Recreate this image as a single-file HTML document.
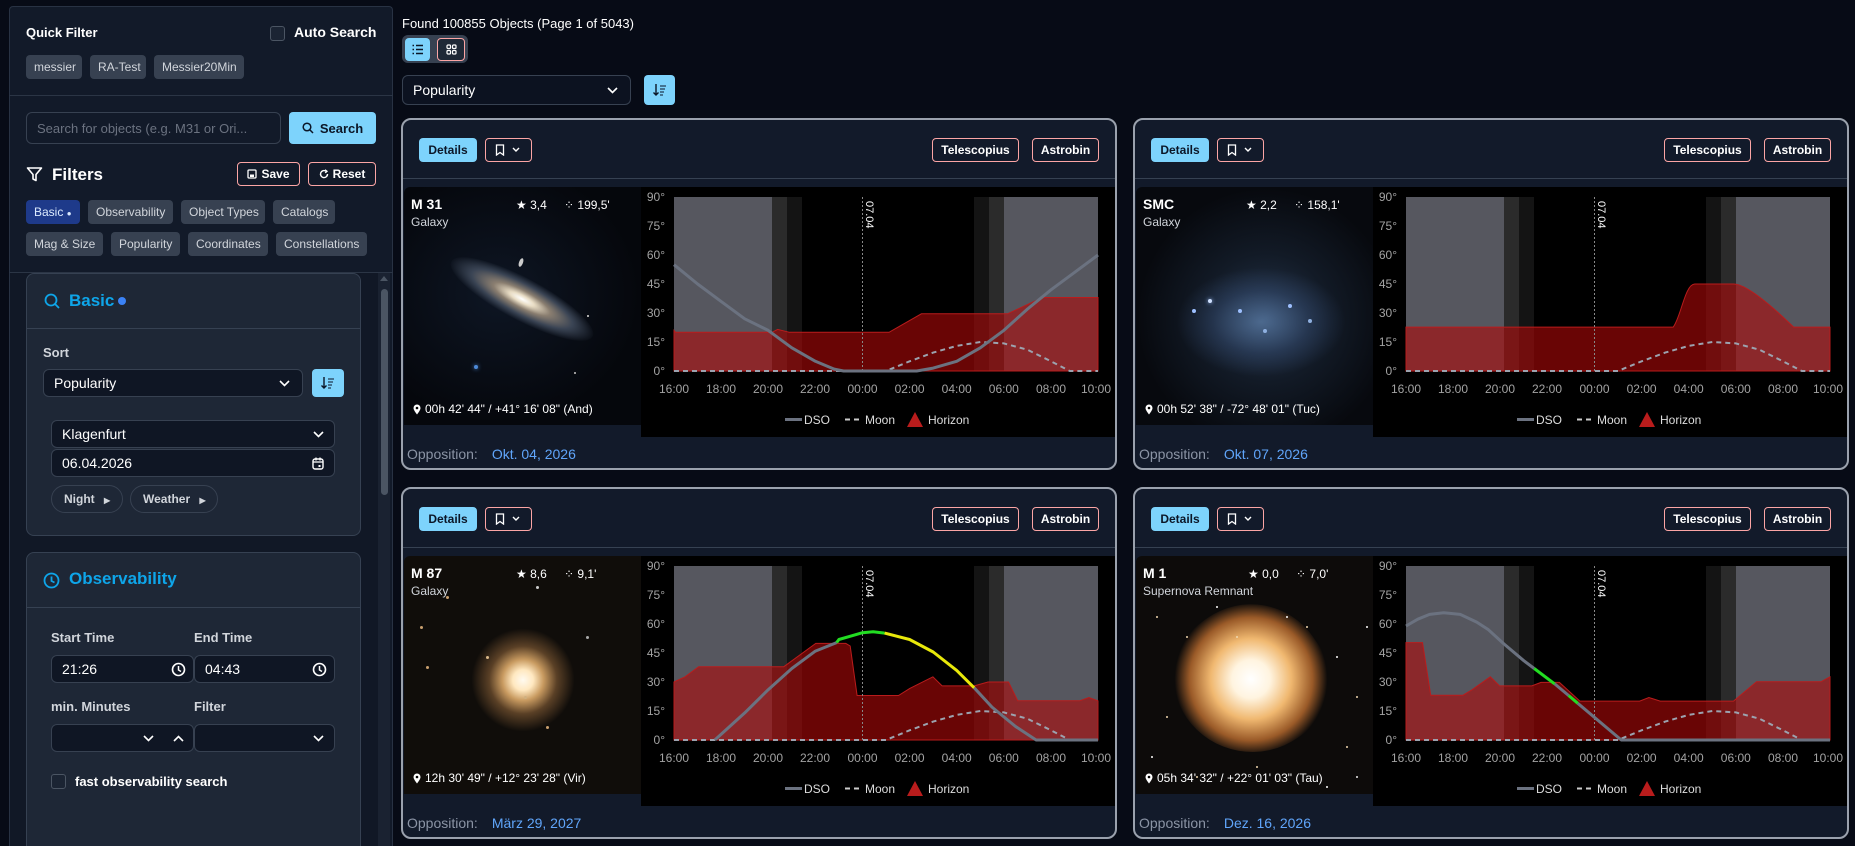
<!DOCTYPE html>
<html><head><meta charset="utf-8">
<style>
*{box-sizing:border-box;margin:0;padding:0}
html,body{width:1855px;height:846px;overflow:hidden}
body{background:#070b16;font-family:"Liberation Sans",sans-serif;color:#fff;position:relative}
.a{position:absolute}
.side{left:9px;top:6px;width:384px;height:845px;background:#121a29;border:1px solid #283243;border-bottom:none;border-radius:4px 4px 0 0}
.chip{position:absolute;height:24px;line-height:24px;background:#374151;color:#d1d5db;font-size:12px;padding:0 8px;border-radius:4px;white-space:nowrap}
.hl{position:absolute;left:9px;width:384px;height:1px;background:#2b3545}
.inp{position:absolute;background:#0f1624;border:1px solid #374151;border-radius:6px;font-size:14px;color:#fff;padding-left:10px;display:flex;align-items:center}
.lbl{position:absolute;font-size:13px;font-weight:bold;color:#d1d5db}
.pcard{position:absolute;left:26px;width:335px;background:#1e2736;border:1px solid #364152;border-radius:8px}
.obtn{position:absolute;height:24px;border:1px solid #fca5a5;border-radius:4px;font-size:12px;font-weight:bold;color:#fff;display:flex;align-items:center;justify-content:center;gap:4px}
.card{position:absolute;width:716px;height:352px;border:2px solid #9aa1ad;border-radius:10px;background:#121a2a;overflow:hidden}
.card .det{position:absolute;left:16px;top:18px;width:58px;height:24px;background:#7dd3fc;color:#0b1627;border-radius:4px;font-size:12px;font-weight:bold;text-align:center;line-height:24px}
.card .bm{left:82px;top:18px;width:47px}
.card .tel{right:96px;top:18px;width:87px}
.card .ast{right:16px;top:18px;width:67px}
.card .dv{position:absolute;left:0;right:0;top:58px;height:1px;background:#364152}
.card .img{position:absolute;left:1px;top:67px;width:237px;height:238px;background:#000;overflow:hidden;border-radius:6px 0 0 0}
.card .ch{position:absolute;left:238px;top:67px;width:475px;height:250px;background:#000}
.card .opp{position:absolute;left:4px;top:326px;font-size:14px;color:#8b94a5}
.card .opp b{font-weight:normal;color:#60a5fa;margin-left:14px}
.nm{position:absolute;left:7px;top:9px;font-size:14px;font-weight:bold;color:#fff}
.ty{position:absolute;left:7px;top:28px;font-size:12px;color:#d1d5db}
.mg{position:absolute;left:112px;top:11px;font-size:12px;color:#fff}
.sz{position:absolute;left:160px;top:11px;font-size:12px;color:#fff}
.co{position:absolute;left:9px;top:215px;font-size:12px;color:#fff;display:flex;align-items:center;gap:4px}
svg text{font-family:"Liberation Sans",sans-serif}
</style></head><body>

<div class="a side"></div>
<div class="a" style="left:26px;top:25px;font-size:13px;font-weight:bold">Quick Filter</div>
<div class="a" style="left:270px;top:26px;width:15px;height:15px;border:1px solid #4b5563;background:#1b2433;border-radius:3px"></div>
<div class="a" style="left:294px;top:24px;font-size:14px;font-weight:bold">Auto Search</div>
<div class="chip" style="left:26px;top:55px;width:56px">messier</div>
<div class="chip" style="left:90px;top:55px;width:56px">RA-Test</div>
<div class="chip" style="left:154px;top:55px;width:90px">Messier20Min</div>
<div class="hl" style="top:95px"></div>
<div class="inp" style="left:26px;top:112px;width:255px;height:32px;color:#6b7280;font-size:13px;background:#121a29">Search for objects (e.g. M31 or Ori...</div>
<div class="a" style="left:289px;top:112px;width:87px;height:32px;background:#7dd3fc;border-radius:4px;color:#0b1627;font-size:13px;font-weight:bold;display:flex;align-items:center;justify-content:center;gap:6px">
<svg width="12" height="12" viewBox="0 0 12 12"><circle cx="5" cy="5" r="3.8" fill="none" stroke="#0b1627" stroke-width="1.5"/><path d="M8 8l3 3" stroke="#0b1627" stroke-width="1.5"/></svg>Search</div>
<svg class="a" style="left:26px;top:166px" width="17" height="17" viewBox="0 0 17 17"><path d="M1.5 2h14l-5.5 6.5v6l-3-1.5v-4.5z" fill="none" stroke="#fff" stroke-width="1.6" stroke-linejoin="round"/></svg>
<div class="a" style="left:52px;top:165px;font-size:17px;font-weight:bold">Filters</div>
<div class="obtn" style="left:237px;top:162px;width:63px"><svg width="10" height="10" viewBox="0 0 10 10"><rect x="1" y="1" width="8" height="8" rx="1" fill="none" stroke="#fff" stroke-width="1.3"/><rect x="3" y="5.5" width="4" height="2.5" fill="#fff"/></svg>Save</div>
<div class="obtn" style="left:308px;top:162px;width:68px"><svg width="10" height="10" viewBox="0 0 10 10"><path d="M8.5 5A3.5 3.5 0 1 1 7 2.2" fill="none" stroke="#fff" stroke-width="1.4"/><path d="M6 0.8l2 1.5-1.8 1.6" fill="none" stroke="#fff" stroke-width="1.3"/></svg>Reset</div>
<div class="chip" style="left:26px;top:200px;width:54px;background:#1e3a8a;color:#dbeafe">Basic <span style="font-size:8px">●</span></div>
<div class="chip" style="left:88px;top:200px;width:85px">Observability</div>
<div class="chip" style="left:181px;top:200px;width:84px">Object Types</div>
<div class="chip" style="left:273px;top:200px;width:62px">Catalogs</div>
<div class="chip" style="left:26px;top:232px;width:77px">Mag &amp; Size</div>
<div class="chip" style="left:111px;top:232px;width:69px">Popularity</div>
<div class="chip" style="left:188px;top:232px;width:80px">Coordinates</div>
<div class="chip" style="left:276px;top:232px;width:91px">Constellations</div>
<div class="hl" style="top:272px"></div>
<div class="a" style="left:10px;top:273px;width:368px;height:573px;background:#111826"></div>
<div class="a" style="left:378px;top:273px;width:12px;height:573px;background:#1a2231"></div>
<div class="a" style="left:381px;top:289px;width:7px;height:206px;background:#4b5563;border-radius:4px"></div>
<div class="a" style="left:380px;top:276px;width:0;height:0;border-left:4px solid transparent;border-right:4px solid transparent;border-bottom:5px solid #4b5563"></div>

<div class="pcard" style="top:273px;height:263px"></div>
<svg class="a" style="left:44px;top:293px" width="16" height="16" viewBox="0 0 16 16"><circle cx="7" cy="7" r="5.5" fill="none" stroke="#0ea5e9" stroke-width="1.8"/><path d="M11 11l4 4" stroke="#0ea5e9" stroke-width="1.8"/></svg>
<div class="a" style="left:69px;top:291px;font-size:17px;font-weight:bold;color:#0ea5e9">Basic</div>
<div class="a" style="left:118px;top:297px;width:8px;height:8px;border-radius:50%;background:#3b82f6"></div>
<div class="a" style="left:27px;top:328px;width:333px;height:1px;background:#364152"></div>
<div class="lbl" style="left:43px;top:345px">Sort</div>
<div class="inp" style="left:43px;top:369px;width:260px;height:28px">Popularity
<svg class="a" style="right:12px;top:10px" width="11" height="7" viewBox="0 0 11 7"><path d="M1 1l4.5 4.5L10 1" fill="none" stroke="#fff" stroke-width="1.6"/></svg></div>
<div class="a" style="left:312px;top:369px;width:32px;height:28px;background:#7dd3fc;border-radius:4px"><svg style="position:absolute;left:8px;top:7px" width="16" height="14" viewBox="0 0 16 14"><path d="M4 1v11M1.5 9.5L4 12l2.5-2.5" fill="none" stroke="#0b1627" stroke-width="1.4"/><path d="M8 3h6M8 6h5M8 9h4M8 12h3" stroke="#0b1627" stroke-width="1.1"/></svg></div>
<div class="inp" style="left:51px;top:420px;width:284px;height:28px">Klagenfurt
<svg class="a" style="right:10px;top:10px" width="11" height="7" viewBox="0 0 11 7"><path d="M1 1l4.5 4.5L10 1" fill="none" stroke="#fff" stroke-width="1.6"/></svg></div>
<div class="inp" style="left:51px;top:449px;width:284px;height:28px">06.04.2026
<svg class="a" style="right:10px;top:7px" width="12" height="13" viewBox="0 0 12 13"><rect x="1" y="2" width="10" height="10" rx="2" fill="none" stroke="#fff" stroke-width="1.4"/><path d="M1 5h10M4 0.5v3M8 0.5v3" stroke="#fff" stroke-width="1.3"/><rect x="6.5" y="8" width="2" height="2" fill="#fff"/></svg></div>
<div class="a" style="left:51px;top:485px;width:72px;height:28px;border:1px solid #374151;border-radius:14px;font-size:12px;font-weight:bold;color:#d1d5db;line-height:26px;padding-left:12px">Night <span style="font-size:8px;margin-left:6px">▶</span></div>
<div class="a" style="left:130px;top:485px;width:88px;height:28px;border:1px solid #374151;border-radius:14px;font-size:12px;font-weight:bold;color:#d1d5db;line-height:26px;padding-left:12px">Weather <span style="font-size:8px;margin-left:6px">▶</span></div>

<div class="pcard" style="top:552px;height:320px"></div>
<svg class="a" style="left:43px;top:572px" width="17" height="17" viewBox="0 0 17 17"><circle cx="8.5" cy="8.5" r="7" fill="none" stroke="#0ea5e9" stroke-width="1.8"/><path d="M8.5 4.5v4.5l3 1.5" fill="none" stroke="#0ea5e9" stroke-width="1.8"/></svg>
<div class="a" style="left:69px;top:569px;font-size:17px;font-weight:bold;color:#0ea5e9">Observability</div>
<div class="a" style="left:27px;top:607px;width:333px;height:1px;background:#364152"></div>
<div class="lbl" style="left:51px;top:630px">Start Time</div>
<div class="lbl" style="left:194px;top:630px">End Time</div>
<div class="inp" style="left:51px;top:655px;width:143px;height:28px">21:26
<svg class="a" style="right:7px;top:6px" width="15" height="15" viewBox="0 0 15 15"><circle cx="7.5" cy="7.5" r="6" fill="none" stroke="#fff" stroke-width="1.6"/><path d="M7.5 4v4l2.5 1.5" fill="none" stroke="#fff" stroke-width="1.5"/></svg></div>
<div class="inp" style="left:194px;top:655px;width:141px;height:28px">04:43
<svg class="a" style="right:7px;top:6px" width="15" height="15" viewBox="0 0 15 15"><circle cx="7.5" cy="7.5" r="6" fill="none" stroke="#fff" stroke-width="1.6"/><path d="M7.5 4v4l2.5 1.5" fill="none" stroke="#fff" stroke-width="1.5"/></svg></div>
<div class="lbl" style="left:51px;top:699px">min. Minutes</div>
<div class="lbl" style="left:194px;top:699px">Filter</div>
<div class="inp" style="left:51px;top:724px;width:143px;height:28px">
<svg class="a" style="left:91px;top:10px" width="11" height="7" viewBox="0 0 11 7"><path d="M1 1l4.5 4.5L10 1" fill="none" stroke="#fff" stroke-width="1.6"/></svg>
<svg class="a" style="left:121px;top:10px" width="11" height="7" viewBox="0 0 11 7"><path d="M1 6l4.5-4.5L10 6" fill="none" stroke="#fff" stroke-width="1.6"/></svg></div>
<div class="inp" style="left:194px;top:724px;width:141px;height:28px">
<svg class="a" style="right:10px;top:10px" width="11" height="7" viewBox="0 0 11 7"><path d="M1 1l4.5 4.5L10 1" fill="none" stroke="#fff" stroke-width="1.6"/></svg></div>
<div class="a" style="left:51px;top:774px;width:15px;height:15px;border:1px solid #4b5563;background:#1b2433;border-radius:3px"></div>
<div class="a" style="left:75px;top:774px;font-size:13px;font-weight:bold">fast observability search</div>

<div class="a" style="left:402px;top:16px;font-size:13px">Found 100855 Objects (Page 1 of 5043)</div>
<div class="a" style="left:402px;top:35px;width:66px;height:28px;background:#374151;border-radius:6px"></div>
<div class="a" style="left:405px;top:38px;width:25px;height:23px;background:#7dd3fc;border-radius:4px"><svg style="position:absolute;left:7px;top:6px" width="11" height="11" viewBox="0 0 11 11"><path d="M0.5 1.5h1.5M0.5 5.5h1.5M0.5 9.5h1.5M4 1.5h7M4 5.5h7M4 9.5h7" stroke="#0b1627" stroke-width="1.4"/></svg></div>
<div class="a" style="left:437px;top:38px;width:28px;height:23px;background:#1f2937;border:1px solid #fca5a5;border-radius:4px"><svg style="position:absolute;left:8px;top:5px" width="11" height="11" viewBox="0 0 11 11"><rect x="1" y="1" width="3.5" height="3.5" rx="1" fill="none" stroke="#fff" stroke-width="1.2"/><rect x="6.5" y="1" width="3.5" height="3.5" rx="1" fill="none" stroke="#fff" stroke-width="1.2"/><rect x="1" y="6.5" width="3.5" height="3.5" rx="1" fill="none" stroke="#fff" stroke-width="1.2"/><rect x="6.5" y="6.5" width="3.5" height="3.5" rx="1" fill="none" stroke="#fff" stroke-width="1.2"/></svg></div>
<div class="inp" style="left:402px;top:75px;width:229px;height:30px;font-size:14px;background:#0c1220">Popularity
<svg class="a" style="right:12px;top:11px" width="11" height="7" viewBox="0 0 11 7"><path d="M1 1l4.5 4.5L10 1" fill="none" stroke="#fff" stroke-width="1.6"/></svg></div>
<div class="a" style="left:644px;top:75px;width:31px;height:30px;background:#7dd3fc;border-radius:4px"><svg style="position:absolute;left:8px;top:8px" width="16" height="14" viewBox="0 0 16 14"><path d="M4 1v11M1.5 9.5L4 12l2.5-2.5" fill="none" stroke="#0b1627" stroke-width="1.4"/><path d="M8 3h6M8 6h5M8 9h4M8 12h3" stroke="#0b1627" stroke-width="1.1"/></svg></div>

<svg width="0" height="0" style="position:absolute">
<defs>
<g id="bg">
<rect x="33" y="10" width="98" height="174" fill="#56575f"/>
<rect x="131" y="10" width="15" height="174" fill="#2b2b2b"/>
<rect x="146" y="10" width="15" height="174" fill="#141414"/>
<rect x="333" y="10" width="15" height="174" fill="#141414"/>
<rect x="348" y="10" width="15" height="174" fill="#2b2b2b"/>
<rect x="363" y="10" width="94" height="174" fill="#56575f"/>
</g>
<g id="ov">
<line x1="221.5" y1="10" x2="221.5" y2="184" stroke="#888" stroke-width="1" stroke-dasharray="2,2"/>
<text transform="translate(225,14) rotate(90)" font-size="11" fill="#fff">07.04</text>
<polyline points="33,184 245,184 268.6,174.3 292.2,165.6 315.7,158.9 339.3,155 362.8,156.4 386.4,162.7 410,174.3 428.8,184 457,184" fill="none" stroke="#9ca3af" stroke-width="2" stroke-dasharray="5,4"/>
<g font-size="12" fill="#a3a3a3" text-anchor="end">
<text x="24" y="14">90°</text><text x="24" y="43">75°</text><text x="24" y="72">60°</text><text x="24" y="101">45°</text><text x="24" y="130">30°</text><text x="24" y="159">15°</text><text x="24" y="188">0°</text></g>
<g font-size="12" fill="#a3a3a3" text-anchor="middle">
<text x="33" y="206">16:00</text><text x="80" y="206">18:00</text><text x="127" y="206">20:00</text><text x="174" y="206">22:00</text><text x="221.5" y="206">00:00</text><text x="268.6" y="206">02:00</text><text x="315.7" y="206">04:00</text><text x="362.8" y="206">06:00</text><text x="410" y="206">08:00</text><text x="455" y="206">10:00</text></g>
<rect x="144" y="231" width="17" height="3" fill="#6b7280"/>
<text x="163" y="237" font-size="12" fill="#ddd">DSO</text>
<path d="M204 232.5h5M213 232.5h5" stroke="#ccc" stroke-width="2"/>
<text x="224" y="237" font-size="12" fill="#ddd">Moon</text>
<path d="M266 240L274 225L282 240Z" fill="#b91c1c"/>
<text x="287" y="237" font-size="12" fill="#ddd">Horizon</text>
</g>
</defs></svg>

<div class="card" style="left:401px;top:118px">
<div class="det">Details</div>
<div class="obtn bm"><svg width="10" height="12" viewBox="0 0 10 12"><path d="M1.5 1h7v10L5 8.5 1.5 11z" fill="none" stroke="#fff" stroke-width="1.3"/></svg><svg width="14" height="8" viewBox="0 0 14 8"><path d="M4 2l3 3 3-3" fill="none" stroke="#fff" stroke-width="1.4"/></svg></div>
<div class="obtn tel">Telescopius</div><div class="obtn ast">Astrobin</div>
<div class="dv"></div>
<div class="img" style="background:radial-gradient(ellipse at 40% 45%,#0e1624 0%,#05070c 70%)">
<div class="a" style="left:38px;top:91px;width:160px;height:42px;border-radius:50%;transform:rotate(28deg);background:radial-gradient(ellipse,#fff 0%,#e8dcc4 12%,#8a7e70 28%,#3a4454 50%,rgba(20,30,45,0) 72%)"></div>
<div class="a" style="left:115px;top:71px;width:4px;height:9px;border-radius:50%;background:#ccc;transform:rotate(20deg)"></div>
<div class="a" style="left:70px;top:178px;width:4px;height:4px;border-radius:50%;background:#4d8ad8;box-shadow:0 0 4px #4d8ad8"></div>
<div class="a" style="left:183px;top:128px;width:2px;height:2px;background:#aaa"></div>
<div class="a" style="left:170px;top:185px;width:2px;height:2px;background:#999"></div>
<div class="nm">M 31</div><div class="ty">Galaxy</div>
<div class="mg">★ 3,4</div><div class="sz">⁘ 199,5'</div>
<div class="co"><svg width="8" height="11" viewBox="0 0 8 11"><path d="M4 10.5C1 6.5 0.5 5 0.5 4A3.5 3.5 0 0 1 7.5 4c0 1-.5 2.5-3.5 6.5z" fill="#fff"/><circle cx="4" cy="4" r="1.3" fill="#000"/></svg>00h 42' 44" / +41° 16' 08" (And)</div>
</div>
<svg class="ch" viewBox="0 0 475 250"><use href="#bg"/>
<path d="M33,184 L33,143.4 L34.5,145.3 L131,145.3 L136.7,142.4 L148.4,145.3 L248.1,145.3 L280.4,126.8 L366.6,126.8 L401.5,110.5 L457,110.5 L457,184Z" fill="rgba(175,8,8,0.6)" stroke="#b91c1c" stroke-width="1"/>
<use href="#ov"/>
<polyline points="33,77.7 56.6,97 80.1,114.4 103.7,131.8 127.2,143.4 150.8,160.8 174.4,174.3 193.2,182.1 202.6,184 275.7,184 292.2,181.1 315.7,174.3 339.3,160.8 362.8,143.4 386.4,122.1 410,102.8 433.5,85.4 457,68" fill="none" stroke="#6b7280" stroke-width="3" stroke-linejoin="round"/>
</svg>
<div class="opp">Opposition:<b>Okt. 04, 2026</b></div>
</div>

<div class="card" style="left:1133px;top:118px">
<div class="det">Details</div>
<div class="obtn bm"><svg width="10" height="12" viewBox="0 0 10 12"><path d="M1.5 1h7v10L5 8.5 1.5 11z" fill="none" stroke="#fff" stroke-width="1.3"/></svg><svg width="14" height="8" viewBox="0 0 14 8"><path d="M4 2l3 3 3-3" fill="none" stroke="#fff" stroke-width="1.4"/></svg></div>
<div class="obtn tel">Telescopius</div><div class="obtn ast">Astrobin</div>
<div class="dv"></div>
<div class="img" style="background:radial-gradient(ellipse at 55% 55%,#24344a 0%,#121a26 35%,#07090e 70%)">
<div class="a" style="left:40px;top:80px;width:170px;height:110px;border-radius:50%;background:radial-gradient(ellipse,rgba(110,150,200,0.55) 0%,rgba(70,100,150,0.3) 40%,rgba(20,30,50,0) 70%)"></div>
<div class="a" style="left:72px;top:112px;width:4px;height:4px;border-radius:50%;background:#cfe0ff;box-shadow:0 0 4px #9ec0ff,30px 10px 0 #9ec0ff,-16px 10px 0 #9ec0ff,80px 5px 0 #9ec0ff,100px 20px 0 #8fb0e0,55px 30px 0 #8fb0e0,140px 150px 0 #ddd"></div>
<div class="nm">SMC</div><div class="ty">Galaxy</div>
<div class="mg" style="left:110px">★ 2,2</div><div class="sz" style="left:158px">⁘ 158,1'</div>
<div class="co"><svg width="8" height="11" viewBox="0 0 8 11"><path d="M4 10.5C1 6.5 0.5 5 0.5 4A3.5 3.5 0 0 1 7.5 4c0 1-.5 2.5-3.5 6.5z" fill="#fff"/><circle cx="4" cy="4" r="1.3" fill="#000"/></svg>00h 52' 38" / -72° 48' 01" (Tuc)</div>
</div>
<svg class="ch" viewBox="0 0 475 250"><use href="#bg"/>
<path d="M33,184 L33,140.1 L300.2,140.1 C308,130 312,97 321.8,97 L360.5,97 C375,97 405,125 420.6,140.1 L457,140.1 L457,184Z" fill="rgba(175,8,8,0.6)" stroke="#b91c1c" stroke-width="1"/>
<use href="#ov"/>
</svg>
<div class="opp">Opposition:<b>Okt. 07, 2026</b></div>
</div>

<div class="card" style="left:401px;top:487px">
<div class="det">Details</div>
<div class="obtn bm"><svg width="10" height="12" viewBox="0 0 10 12"><path d="M1.5 1h7v10L5 8.5 1.5 11z" fill="none" stroke="#fff" stroke-width="1.3"/></svg><svg width="14" height="8" viewBox="0 0 14 8"><path d="M4 2l3 3 3-3" fill="none" stroke="#fff" stroke-width="1.4"/></svg></div>
<div class="obtn tel">Telescopius</div><div class="obtn ast">Astrobin</div>
<div class="dv"></div>
<div class="img" style="background:#100d0a">
<div class="a" style="left:67px;top:72px;width:104px;height:104px;border-radius:50%;background:radial-gradient(circle,#fffaf0 0%,#ffe8c0 14%,#c89a60 28%,#5a4026 46%,rgba(40,28,18,0) 70%)"></div>
<div class="a" style="left:82px;top:100px;width:3px;height:3px;border-radius:50%;background:#d9b88a;box-shadow:-40px -60px 0 #c9a070,-60px 10px 0 #c9a070,38px 40px 0 #d0b080,-70px 140px 0 #c9a070,-66px -30px 0 #c9a070,100px -20px 0 #aaa,-40px 180px 0 #d09050,50px -70px 0 #ccc,60px 70px 0 #c9a070"></div>
<div class="nm">M 87</div><div class="ty">Galaxy</div>
<div class="mg">★ 8,6</div><div class="sz">⁘ 9,1'</div>
<div class="co"><svg width="8" height="11" viewBox="0 0 8 11"><path d="M4 10.5C1 6.5 0.5 5 0.5 4A3.5 3.5 0 0 1 7.5 4c0 1-.5 2.5-3.5 6.5z" fill="#fff"/><circle cx="4" cy="4" r="1.3" fill="#000"/></svg>12h 30' 49" / +12° 23' 28" (Vir)</div>
</div>
<svg class="ch" viewBox="0 0 475 250"><use href="#bg"/>
<path d="M33,184 L33,126 L44.1,120.8 L57.7,110.7 L142.8,110.7 L174.8,87.4 L204.8,87.4 L209.2,90 L216.1,139.5 L257.5,139.5 L268.8,132.4 L291.9,120.8 L301.1,129.9 L333.2,129.9 L347,126 L367.5,126 L376.7,144.8 L438.7,144.8 L447.9,141.5 L457,144.8 L457,184Z" fill="rgba(175,8,8,0.6)" stroke="#b91c1c" stroke-width="1"/>
<use href="#ov"/>
<polyline points="73.8,184 103.7,156.9 127.2,133.7 150.8,112.5 174.4,95.1 195.6,86.6" fill="none" stroke="#6b7280" stroke-width="3" stroke-linejoin="round"/>
<polyline points="195.6,86.6 197.9,83.5 221.5,76.7 232.1,75.8 243.6,77.1" fill="none" stroke="#22dd22" stroke-width="3" stroke-linejoin="round"/>
<polyline points="243.6,77.1 268.6,83.5 292.2,96 315.7,114.4 333.2,131.8" fill="none" stroke="#e8e80a" stroke-width="3" stroke-linejoin="round"/>
<polyline points="333.2,131.8 351,151.1 374.6,170.5 395.1,184 457,184" fill="none" stroke="#6b7280" stroke-width="3" stroke-linejoin="round"/>
</svg>
<div class="opp">Opposition:<b>März 29, 2027</b></div>
</div>

<div class="card" style="left:1133px;top:487px">
<div class="det">Details</div>
<div class="obtn bm"><svg width="10" height="12" viewBox="0 0 10 12"><path d="M1.5 1h7v10L5 8.5 1.5 11z" fill="none" stroke="#fff" stroke-width="1.3"/></svg><svg width="14" height="8" viewBox="0 0 14 8"><path d="M4 2l3 3 3-3" fill="none" stroke="#fff" stroke-width="1.4"/></svg></div>
<div class="obtn tel">Telescopius</div><div class="obtn ast">Astrobin</div>
<div class="dv"></div>
<div class="img" style="background:#0d0b0a">
<div class="a" style="left:40px;top:48px;width:150px;height:150px;border-radius:48% 52% 45% 55%;transform:rotate(-35deg);background:radial-gradient(ellipse,#ffffff 0%,#fff4e0 18%,#f0b870 38%,#9a5a28 58%,rgba(60,30,15,0) 72%)"></div>
<div class="a" style="left:20px;top:60px;width:2px;height:2px;border-radius:50%;background:#f0d8b0;box-shadow:30px 20px 0 #f0d8b0,60px -10px 0 #fff,150px 10px 0 #f0d8b0,180px 40px 0 #fff,200px 80px 0 #f0d8b0,10px 100px 0 #f0d8b0,-5px 140px 0 #fff,190px 130px 0 #f0d8b0,170px 170px 0 #fff,100px 150px 0 #f0d8b0,130px 0 0 #fff,40px 160px 0 #f0d8b0,210px 10px 0 #fff,80px 20px 0 #f0d8b0,200px 160px 0 #eee"></div>
<div class="nm">M 1</div><div class="ty">Supernova Remnant</div>
<div class="mg">★ 0,0</div><div class="sz">⁘ 7,0'</div>
<div class="co"><svg width="8" height="11" viewBox="0 0 8 11"><path d="M4 10.5C1 6.5 0.5 5 0.5 4A3.5 3.5 0 0 1 7.5 4c0 1-.5 2.5-3.5 6.5z" fill="#fff"/><circle cx="4" cy="4" r="1.3" fill="#000"/></svg>05h 34' 32" / +22° 01' 03" (Tau)</div>
</div>
<svg class="ch" viewBox="0 0 475 250"><use href="#bg"/>
<path d="M33,184 L33,86.6 L49.5,86.6 L57.7,139.2 L90,139.2 L99.2,133.7 L117.3,120.8 L126.5,129.9 L158.8,129.9 L168,126.4 L186.4,126.4 L206.9,145.1 L266.7,145.1 L275.9,141.5 L287.2,145.1 L360.5,145.1 L383.6,125.8 L447.9,125.8 L457,120.8 L457,184Z" fill="rgba(175,8,8,0.6)" stroke="#b91c1c" stroke-width="1"/>
<use href="#ov"/>
<polyline points="33,70 44.8,63.2 56.6,58.4 70.7,56.8 87.2,58.4 103.7,66.1 115.5,73.8 130.3,87.4 150.8,104.7 161.2,112.5" fill="none" stroke="#6b7280" stroke-width="3" stroke-linejoin="round"/>
<polyline points="161.2,112.5 181.7,127.9" fill="none" stroke="#22dd22" stroke-width="3"/>
<polyline points="181.7,127.9 195.6,139.5" fill="none" stroke="#6b7280" stroke-width="3"/>
<polyline points="195.6,139.5 204.8,147.3" fill="none" stroke="#22dd22" stroke-width="3"/>
<polyline points="204.8,147.3 248.3,184 457,184" fill="none" stroke="#6b7280" stroke-width="3" stroke-linejoin="round"/>
</svg>
<div class="opp">Opposition:<b>Dez. 16, 2026</b></div>
</div>

</body></html>
